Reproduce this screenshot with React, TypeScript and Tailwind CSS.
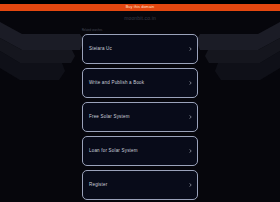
import React from "react";

const items = [
  "Steiara Uc",
  "Write and Publish a Book",
  "Free Solar System",
  "Loan for Solar System",
  "Register",
];

function Bg() {
  const left = [
    { p: "0,22 22,34 80,34 84,41 80,50 22,50 0,38", f: "#1b1c26" },
    { p: "0,38 22,50 72,50 75,56 71,63 20,63 0,51", f: "#15161e" },
    { p: "0,51 20,63 62,63 65,71 59,80 20,80 0,68", f: "#0f1018" },
  ];
  return (
    <svg
      className="absolute inset-0"
      width="280"
      height="202"
      viewBox="0 0 280 202"
    >
      {left.map((s, i) => (
        <polygon key={"l" + i} points={s.p} fill={s.f} />
      ))}
      <g transform="translate(280,0) scale(-1,1)">
        {left.map((s, i) => (
          <polygon key={"r" + i} points={s.p} fill={s.f} />
        ))}
      </g>
    </svg>
  );
}

export default function App() {
  return (
    <div
      className="relative w-[280px] h-[202px] overflow-hidden bg-[#06060c]"
      style={{ fontFamily: '"Liberation Sans", Arial, sans-serif' }}
    >
      <Bg />
      <div className="relative">
        <div className="h-[4px] bg-black" />
        <div className="h-[7px] bg-[#e4470f] flex items-center justify-center">
          <span className="text-[3.8px] leading-none tracking-[0.1px] text-[#ffe2d2]">
            Buy this domain
          </span>
        </div>
        <div className="h-[15px] flex items-center justify-center">
          <span className="text-[5px] leading-none tracking-[0.15px] text-[#383b47]">
            moonbit.co.in
          </span>
        </div>
        <div className="w-[116px] mx-auto">
          <div className="h-[8px] flex items-end pb-[1px]">
            <span className="text-[2.6px] leading-none text-[#4a4e5c]">
              Related searches
            </span>
          </div>
          <div className="flex flex-col gap-[4px]">
            {items.map((t) => (
              <div
                key={t}
                className="h-[30px] rounded-[5px] border border-[#9aa2ba] bg-[#080b19] flex items-center justify-between pl-[6px] pr-[5px]"
              >
                <span className="text-[4.5px] leading-none tracking-[0.2px] text-[#cdd1dc]">
                  {t}
                </span>
                <svg width="3" height="4" viewBox="0 0 3 4">
                  <path
                    d="M0.7 0.4 L2.2 2 L0.7 3.6"
                    stroke="#cdd1dc"
                    strokeWidth="0.6"
                    fill="none"
                  />
                </svg>
              </div>
            ))}
          </div>
        </div>
      </div>
    </div>
  );
}
